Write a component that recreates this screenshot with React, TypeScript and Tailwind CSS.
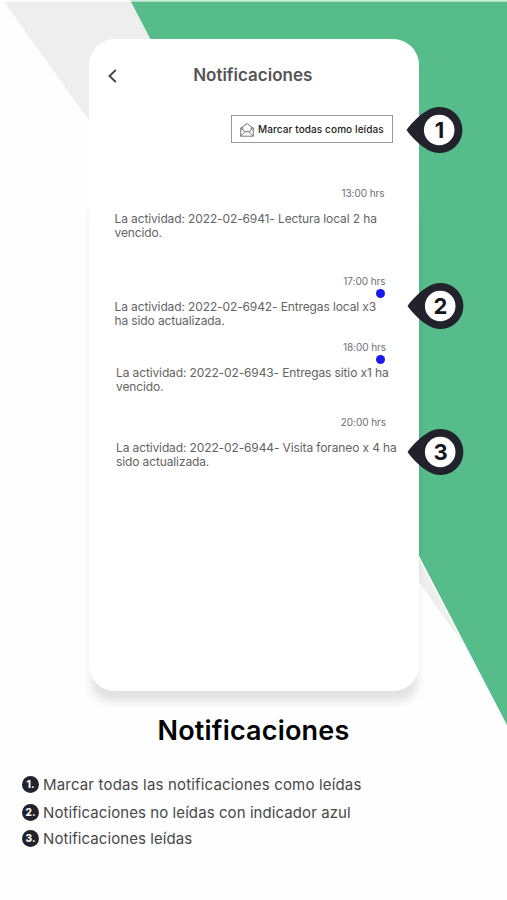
import type { ReactNode } from 'react';

interface Notification {
  id: number;
  time: string;
  lines: [string, string];
  unread?: boolean;
  pin?: number;
  pinClass?: string;
  rowClass: string;
  timeClass: string;
  textClass: string;
}

const NOTIFICATIONS: Notification[] = [
  {
    id: 6941,
    time: '13:00 hrs',
    lines: ['La actividad: 2022-02-6941- Lectura local 2 ha', 'vencido.'],
    rowClass: 'mt-[43px] h-[88px]',
    timeClass: 'pr-[34px]',
    textClass: 'pl-[25.5px] mt-[12px]',
  },
  {
    id: 6942,
    time: '17:00 hrs',
    lines: ['La actividad: 2022-02-6942- Entregas local x3', 'ha sido actualizada.'],
    unread: true,
    pin: 2,
    pinClass: 'left-[318px] top-[8px]',
    rowClass: 'h-[66px]',
    timeClass: 'pr-[33px]',
    textClass: 'pl-[25.5px] mt-[12px]',
  },
  {
    id: 6943,
    time: '18:00 hrs',
    lines: ['La actividad: 2022-02-6943- Entregas sitio x1 ha', 'vencido.'],
    unread: true,
    rowClass: 'h-[75px]',
    timeClass: 'pr-[32.5px]',
    textClass: 'pl-[27px] mt-[12px]',
  },
  {
    id: 6944,
    time: '20:00 hrs',
    lines: ['La actividad: 2022-02-6944- Visita foraneo x 4 ha', 'sido actualizada.'],
    pin: 3,
    pinClass: 'left-[318px] top-[13px]',
    rowClass: 'h-[75px]',
    timeClass: 'pr-[32.5px]',
    textClass: 'pl-[27px] mt-[12px]',
  },
];

const LEGEND = [
  { id: 1, label: 'Marcar todas las notificaciones como leídas', textClass: 'tracking-[0.17px]', rowClass: 'h-[28px]' },
  { id: 2, label: 'Notificaciones no leídas con indicador azul', textClass: 'tracking-[0.08px]', rowClass: 'h-[26px]' },
  { id: 3, label: 'Notificaciones leídas', textClass: 'tracking-[0.08px]', rowClass: 'h-[26px]' },
];

function Backdrop() {
  return (
    <svg className="absolute inset-0" width="507" height="900" viewBox="0 0 507 900">
      <defs>
        <filter id="soft" x="-10%" y="-10%" width="120%" height="120%">
          <feGaussianBlur stdDeviation="4" />
        </filter>
      </defs>
      <path d="M4 1.7H131L462 642Z" fill="#eeeeee" />
      <path d="M130 0H507V2H131Z" fill="#c9ecdb" />
      <path d="M131 1.7H507V725Z" fill="#55bc8a" />
      <rect x="91" y="202" width="326" height="499" rx="18" fill="#000" fillOpacity="0.11" filter="url(#soft)" />
    </svg>
  );
}

function Pin({ children, className = '' }: { children: ReactNode; className?: string }) {
  return (
    <div className={`absolute w-[57px] h-[48px] ${className}`}>
      <svg className="absolute inset-0" width="57" height="48" viewBox="0 0 57 48">
        <path d="M0.5 24C5 17.5 14 8.5 22 4A23 23 0 1 1 22 44C14 39.5 5 30.5 0.5 24Z" fill="#22222d" />
        <circle cx="33.2" cy="24" r="15.3" fill="#fff" />
      </svg>
      <span className="absolute left-[18px] top-0 w-[31px] text-center text-[22px] leading-[48px] font-bold text-[#15151c]">
        {children}
      </span>
    </div>
  );
}

function EnvelopeIcon() {
  return (
    <svg className="shrink-0" width="14" height="14" viewBox="0 0 14 14" fill="none" stroke="#555" strokeWidth="0.8" strokeLinejoin="round">
      <path d="M0.7 5L7 0.7L13.3 5V13.2H0.7Z" />
      <path d="M0.7 5.2L5 8.7H9L13.3 5.2M0.7 13.2L5 8.7M13.3 13.2L9 8.7" />
      <path d="M2.7 6.5V4.2M11.3 6.5V4.2" />
    </svg>
  );
}

function NotificationRow({ item }: { item: Notification }) {
  return (
    <div className={`relative ${item.rowClass}`}>
      <div className={`text-right text-[10px] leading-[14px] tracking-[-0.05px] text-[#6b7075] ${item.timeClass}`}>
        {item.time}
      </div>
      {item.unread && (
        <span className="absolute right-[33.5px] top-[15px] size-[9px] rounded-full bg-[#1a1aee]" />
      )}
      <p className={`whitespace-nowrap text-[12px] leading-[14px] tracking-[-0.12px] text-[#646464] ${item.textClass}`}>
        {item.lines[0]}
        <br />
        {item.lines[1]}
      </p>
      {item.pin && <Pin className={item.pinClass}>{item.pin}</Pin>}
    </div>
  );
}

export default function App() {
  return (
    <div className="relative w-[507px] h-[900px] overflow-hidden bg-[#fefefe]">
      <Backdrop />
      <div className="relative flex flex-col pt-[39px] font-['Inter',sans-serif]">
        {/* Phone screen */}
        <section className="relative ml-[89px] flex h-[652px] w-[329.5px] flex-col rounded-[26px] bg-white">
          <header className="relative flex h-[72px] items-center justify-center">
            <svg className="absolute left-[18px] top-[30px]" width="11" height="14" viewBox="0 0 11 14" fill="none" stroke="#484848" strokeWidth="2">
              <path d="M8.8 1L2.5 7L8.8 13" />
            </svg>
            <h1 className="pr-[2px] pt-[2px] text-[17px] font-semibold text-[#555]">Notificaciones</h1>
          </header>
          <div className="relative flex justify-end pr-[25.5px] pt-[4px]">
            <button className="flex h-[28px] w-[162px] items-center gap-[4px] border border-[#999] pl-[8px] pt-px text-[10px] tracking-[0.1px] font-medium whitespace-nowrap text-[#222]">
              <EnvelopeIcon />
              Marcar todas como leídas
            </button>
            <Pin className="left-[317px] top-[-5px]">1</Pin>
          </div>
          {NOTIFICATIONS.map((item) => (
            <NotificationRow key={item.id} item={item} />
          ))}
        </section>

        {/* Legend */}
        <h2 className="mt-[20px] text-center text-[27px] leading-[39px] tracking-[0.2px] font-semibold text-black">
          Notificaciones
        </h2>
        <ul className="mt-[21px] flex flex-col pl-[22px]">
          {LEGEND.map((item) => (
            <li key={item.id} className={`flex items-start gap-[4px] ${item.rowClass}`}>
              <span className="mt-[5px] flex size-[17px] items-center justify-center rounded-full bg-[#22222d] text-[10px] font-extrabold text-white">
                {item.id}.
              </span>
              <span className={`text-[15px] leading-[28px] text-[#484848] ${item.textClass}`}>{item.label}</span>
            </li>
          ))}
        </ul>
      </div>
    </div>
  );
}
